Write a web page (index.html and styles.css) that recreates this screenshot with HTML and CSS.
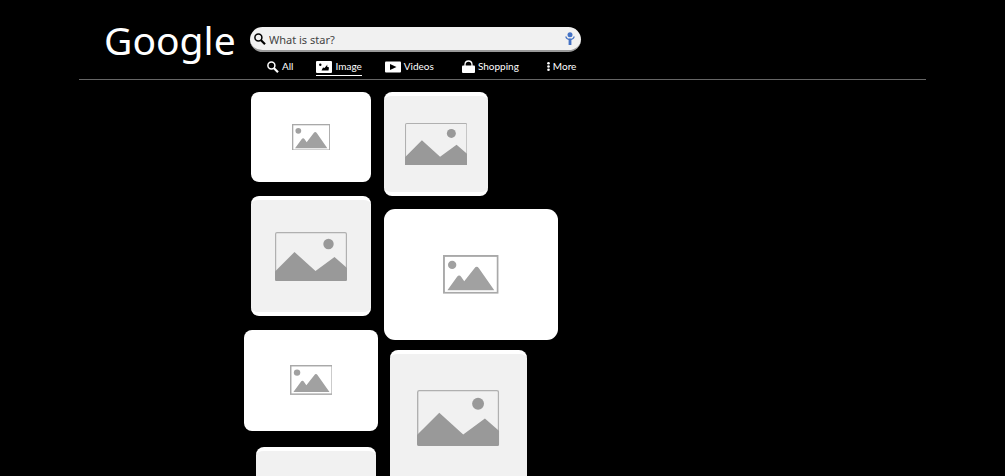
FILE: index.html
```html
<!DOCTYPE html>
<html lang="en">
    <head>
        <meta charset="utf-8">
        <title>Image search</title>
        <meta name="viewport" content="width=device-width, initial-scale=1.0">
        <link rel="stylesheet" href="styles.css">
    </head>
    <body>
        <!-- shared drawings -->
        <svg class="defs" aria-hidden="true">
            <symbol id="search" viewBox="0 0 12 12">
                <circle cx="4.4" cy="4.4" r="3.5" fill="none" stroke="currentColor" stroke-width="1.5"/>
                <path d="M6.8 7L11 11.2" stroke="currentColor" stroke-width="2.2"/>
            </symbol>
            <symbol id="small-photo" viewBox="0 0 76 53">
                <rect x="1.3" y="1.3" width="73.4" height="50.4" fill="none" stroke="#a9a9a9" stroke-width="2.6"/>
                <circle cx="12.5" cy="13.5" r="5.7" fill="#a1a1a1"/>
                <path d="M6 48L19 30Q22 26 25 30L29 36L43 18Q46 14 49 18L70 48Z" fill="#a1a1a1"/>
            </symbol>
            <symbol id="large-photo" viewBox="0 0 72 49">
                <rect x=".6" y=".6" width="70.8" height="47.8" rx="1.4" fill="none" stroke="#b0b0b0" stroke-width="1.2"/>
                <circle cx="53.5" cy="12" r="5.2" fill="#999"/>
                <path d="M0 39.500L19.500 20L40.500 39L59.500 25L72 36V47.500Q72 49 70.500 49H1.500Q0 49 0 47.500Z" fill="#999"/>
            </symbol>
        </svg>

        <header>
            <h1 class="logo">Google</h1>
            <div class="search-area">
                <form class="search-box" role="search">
                    <button class="search-btn" type="submit" aria-label="Search">
                        <svg width="12" height="12"><use href="#search"/></svg>
                    </button>
                    <input class="query" type="text" aria-label="Search text" value="What is star?">
                    <button class="voice-btn" type="button" aria-label="Voice">
                        <svg width="10" height="14" viewBox="0 0 10 14">
                            <circle cx="5" cy="2.700" r="2.500" fill="#4472c4"/>
                            <path d="M.9 4.500Q1.300 7.300 5 7.600Q8.700 7.300 9.100 4.500" fill="none" stroke="#4472c4" stroke-width="1.400"/>
                            <path d="M5 6.500V13" stroke="#4472c4" stroke-width="2.800"/>
                        </svg>
                    </button>
                </form>
                <nav>
                    <a href="#">
                        <svg width="12" height="12"><use href="#search"/></svg>
                        All
                    </a>
                    <a class="active" href="#">
                        <svg width="16" height="12" viewBox="0 0 16 12">
                            <rect width="16" height="12" rx="1" fill="#fff"/>
                            <circle cx="4.300" cy="3.700" r="1.200"/>
                            <path d="M5.500 9.500L7 6.500L8.500 7L11.500 3.500L11 5.500L13 6.500L12.500 9.500Z"/>
                        </svg>
                        Image
                    </a>
                    <a href="#">
                        <svg width="16" height="12" viewBox="0 0 16 12">
                            <rect y=".5" width="16" height="11" rx="1" fill="#fff"/>
                            <path d="M5 3L11.500 6L5 9Z"/>
                        </svg>
                        Videos
                    </a>
                    <a class="wide" href="#">
                        <svg width="13" height="13" viewBox="0 0 13 13">
                            <rect y="5.500" width="13" height="7.500" rx="1" fill="#fff"/>
                            <path d="M3 6V4.500Q3.200 1 6.500 1T10 4.500V6" fill="none" stroke="#fff" stroke-width="1.300"/>
                        </svg>
                        Shopping
                    </a>
                    <a class="wide" href="#">
                        <svg width="3" height="9" viewBox="0 0 3 9" fill="#fff">
                            <circle cx="1.500" cy="1.300" r="1.300"/>
                            <circle cx="1.500" cy="4.500" r="1.300"/>
                            <circle cx="1.500" cy="7.700" r="1.300"/>
                        </svg>
                        More
                    </a>
                </nav>
            </div>
        </header>

        <main>
            <div class="column first">
                <div class="card w120 white"><svg viewBox="0 0 76 53"><use href="#small-photo"/></svg></div>
                <div class="card w120 gray"><svg viewBox="0 0 72 49"><use href="#large-photo"/></svg></div>
                <div class="card w134 white"><svg viewBox="0 0 76 53"><use href="#small-photo"/></svg></div>
                <div class="card w120 gray shifted"><svg viewBox="0 0 72 49"><use href="#large-photo"/></svg></div>
            </div>
            <div class="column second">
                <div class="card w104 gray"><svg viewBox="0 0 72 49"><use href="#large-photo"/></svg></div>
                <div class="card w174 white"><svg viewBox="0 0 76 53"><use href="#small-photo"/></svg></div>
                <div class="card w137 gray"><svg viewBox="0 0 72 49"><use href="#large-photo"/></svg></div>
            </div>
        </main>
    </body>
</html>
```
FILE: styles.css
```css
html {
  scrollbar-width: none;
}
body {
  margin: 0;
  background: #000;
  color: #fff;
  font-family: "Noto Sans", sans-serif;
}
.defs {
  display: none;
}
header {
  display: flex;
  margin: 0 79px;
  padding: 12px 0 2px 25px;
  border-bottom: 1px solid #666;
}
.logo {
  width: 146px;
  margin: 0;
  font-size: 39px;
  font-weight: normal;
  line-height: 56px;
}
.search-area {
  flex: 1;
  padding-top: 15px;
}
.search-box {
  display: flex;
  align-items: center;
  box-sizing: border-box;
  max-width: 331px;
  height: 25px;
  padding: 0 6px 0 4px;
  background: #f1f1f1;
  border-bottom: 2px solid #999;
  border-radius: 13px;
}
.search-box button {
  display: flex;
  padding: 0;
  border: none;
  background: none;
  cursor: pointer;
}
.search-btn {
  color: #000;
}
.query {
  flex: 1;
  min-width: 0;
  padding: 2px 3px 0;
  border: none;
  outline: none;
  background: none;
  color: #444;
  font: 11px "Noto Sans", sans-serif;
}
nav {
  display: flex;
  gap: 23px;
  padding: 6px 0 1px 17px;
}
nav a {
  display: flex;
  align-items: center;
  gap: 3px;
  height: 17px;
  color: #fff;
  font-family: Lato, sans-serif;
  font-size: 10px;
  line-height: 17px;
  text-decoration: none;
  border-bottom: 1px solid transparent;
}
nav a.active {
  border-color: #fff;
}
nav a.wide {
  margin-left: 5px;
}

/* image results */
main {
  display: flex;
  gap: 6px;
  padding: 12px 79px 13px 244px;
}
.column {
  display: flex;
  flex-direction: column;
  gap: 14px;
}
.first {
  align-items: center;
}
.second {
  gap: 13px;
}
.card {
  display: flex;
  align-items: center;
  justify-content: center;
  box-sizing: border-box;
  border-radius: 8px;
}
.white {
  aspect-ratio: 4 / 3;
  background: #fff;
}
.white svg {
  width: 32%;
}
.gray {
  aspect-ratio: 1;
  background: #f1f1f1;
  border: solid #fff;
  border-width: 4px 0;
}
.gray svg {
  width: 60%;
}
.w104 {
  width: 104px;
}
.w120 {
  width: 120px;
}
.w134 {
  width: 134px;
}
.w137 {
  width: 137px;
  margin: -3px 0 0 6px;
}
.w174 {
  width: 174px;
  border-radius: 11px;
}
.shifted {
  margin: 2px 0 0 9px;
}
```
